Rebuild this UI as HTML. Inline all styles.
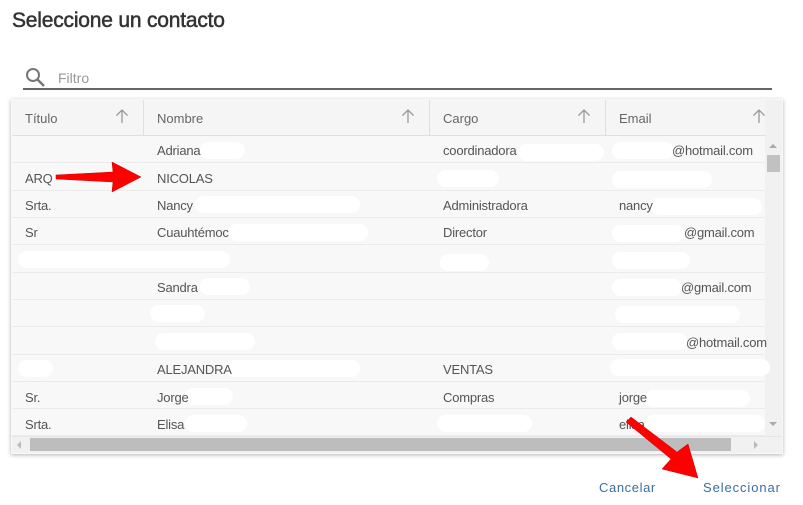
<!DOCTYPE html>
<html><head><meta charset="utf-8">
<style>
*{margin:0;padding:0;box-sizing:border-box}
body{width:803px;height:505px;background:#fff;font-family:"Liberation Sans",sans-serif;position:relative;overflow:hidden;color:#555}
.t{position:absolute;font-size:13px;color:#555;white-space:nowrap;letter-spacing:-0.2px}
.b{position:absolute;background:#fff;border-radius:9px;height:17px}
.row{position:absolute;left:12px;width:753px;height:27px;background:#f8f8f8;border-bottom:1px solid #ebebeb}
.h{position:absolute;font-size:13px;color:#666;top:111px}
.ar{position:absolute;top:108px}
.vl{position:absolute;top:100px;width:1px;height:36px;background:#e0e0e0}
</style></head><body>
<div style="position:absolute;left:12px;top:9px;font-size:21px;color:#333;letter-spacing:-0.2px;-webkit-text-stroke:0.5px #333">Seleccione un contacto</div>
<svg style="position:absolute;left:25px;top:67px" width="22" height="22" viewBox="0 0 22 22"><circle cx="8" cy="8" r="6" fill="none" stroke="#777" stroke-width="2"/><line x1="12.5" y1="12.5" x2="19" y2="19" stroke="#777" stroke-width="2.5"/></svg>
<div style="position:absolute;left:58px;top:70px;font-size:14px;color:#999">Filtro</div>
<div style="position:absolute;left:23px;top:88px;width:749px;height:2px;background:#666"></div>

<div style="position:absolute;left:11px;top:99px;width:772px;height:355px;box-shadow:0 1px 4px rgba(0,0,0,0.3);background:#f8f8f8"></div>
<div style="position:absolute;left:12px;top:100px;width:753px;height:36px;background:#f5f5f5;border-bottom:1px solid #e0e0e0"></div>
<div class="vl" style="left:143px"></div><div class="vl" style="left:429px"></div><div class="vl" style="left:605px"></div>
<div class="h" style="left:25px">Título</div>
<div class="h" style="left:157px">Nombre</div>
<div class="h" style="left:443px">Cargo</div>
<div class="h" style="left:619px">Email</div>
<svg class="ar" style="left:115px" width="14" height="16"><path d="M7 15V2M1.5 7.5L7 2l5.5 5.5" fill="none" stroke="#999" stroke-width="1.3"/></svg>
<svg class="ar" style="left:401px" width="14" height="16"><path d="M7 15V2M1.5 7.5L7 2l5.5 5.5" fill="none" stroke="#999" stroke-width="1.3"/></svg>
<svg class="ar" style="left:577px" width="14" height="16"><path d="M7 15V2M1.5 7.5L7 2l5.5 5.5" fill="none" stroke="#999" stroke-width="1.3"/></svg>
<svg class="ar" style="left:752px" width="14" height="16"><path d="M7 15V2M1.5 7.5L7 2l5.5 5.5" fill="none" stroke="#999" stroke-width="1.3"/></svg>

<div class="row" style="top:136px"></div><div class="row" style="top:164px"></div><div class="row" style="top:191px"></div><div class="row" style="top:218px"></div><div class="row" style="top:246px"></div><div class="row" style="top:273px"></div><div class="row" style="top:300px"></div><div class="row" style="top:328px"></div><div class="row" style="top:355px"></div><div class="row" style="top:382px"></div><div class="row" style="top:410px;height:26px"></div>

<div style="position:absolute;left:765px;top:100px;width:17px;height:336px;background:#f1f1f1"></div>
<div style="position:absolute;left:767px;top:155px;width:13px;height:17px;background:#c1c1c1"></div>
<div style="position:absolute;left:769px;top:144px;width:0;height:0;border-left:4px solid transparent;border-right:4px solid transparent;border-bottom:4px solid #aaa"></div>
<div style="position:absolute;left:769px;top:422px;width:0;height:0;border-left:4px solid transparent;border-right:4px solid transparent;border-top:4px solid #aaa"></div>
<div style="position:absolute;left:12px;top:436px;width:770px;height:17px;background:#f1f1f1;border-top:1px solid #e5e5e5"></div>
<div style="position:absolute;left:30px;top:438px;width:701px;height:13px;background:#bdbdbd"></div>
<div style="position:absolute;left:17px;top:441px;border-top:4px solid transparent;border-bottom:4px solid transparent;border-right:4px solid #bbb"></div>
<div style="position:absolute;left:754px;top:441px;border-top:4px solid transparent;border-bottom:4px solid transparent;border-left:4px solid #bbb"></div>

<div class="b" style="left:200px;top:142px;width:45px"></div>
<div class="b" style="left:518px;top:144px;width:86px"></div>
<div class="b" style="left:612px;top:142px;width:62px"></div>
<div class="b" style="left:437px;top:170px;width:62px"></div>
<div class="b" style="left:612px;top:171px;width:100px"></div>
<div class="b" style="left:195px;top:196px;width:165px"></div>
<div class="b" style="left:650px;top:198px;width:112px"></div>
<div class="b" style="left:228px;top:224px;width:140px"></div>
<div class="b" style="left:612px;top:225px;width:72px"></div>
<div class="b" style="left:18px;top:251px;width:212px"></div>
<div class="b" style="left:440px;top:254px;width:49px"></div>
<div class="b" style="left:612px;top:252px;width:78px"></div>
<div class="b" style="left:200px;top:278px;width:50px"></div>
<div class="b" style="left:612px;top:279px;width:70px"></div>
<div class="b" style="left:150px;top:305px;width:55px"></div>
<div class="b" style="left:615px;top:306px;width:125px"></div>
<div class="b" style="left:155px;top:333px;width:100px"></div>
<div class="b" style="left:612px;top:333px;width:75px"></div>
<div class="b" style="left:18px;top:360px;width:35px"></div>
<div class="b" style="left:225px;top:360px;width:135px"></div>
<div class="b" style="left:610px;top:359px;width:160px"></div>
<div class="b" style="left:185px;top:388px;width:48px"></div>
<div class="b" style="left:645px;top:390px;width:105px"></div>
<div class="b" style="left:185px;top:415px;width:62px"></div>
<div class="b" style="left:437px;top:415px;width:95px"></div>
<div class="b" style="left:645px;top:415px;width:120px"></div>

<div class="t" style="left:157px;top:143px">Adriana</div>
<div class="t" style="left:443px;top:143px">coordinadora</div>
<div class="t" style="left:672px;top:143px">@hotmail.com</div>
<div class="t" style="left:25px;top:171px">ARQ</div>
<div class="t" style="left:157px;top:171px">NICOLAS</div>
<div class="t" style="left:25px;top:198px">Srta.</div>
<div class="t" style="left:157px;top:198px">Nancy</div>
<div class="t" style="left:443px;top:198px">Administradora</div>
<div class="t" style="left:619px;top:198px">nancy</div>
<div class="t" style="left:25px;top:225px">Sr</div>
<div class="t" style="left:157px;top:225px">Cuauhtémoc</div>
<div class="t" style="left:443px;top:225px">Director</div>
<div class="t" style="left:684px;top:225px">@gmail.com</div>
<div class="t" style="left:157px;top:280px">Sandra</div>
<div class="t" style="left:681px;top:280px">@gmail.com</div>
<div class="t" style="left:686px;top:335px">@hotmail.com</div>
<div class="t" style="left:157px;top:362px">ALEJANDRA</div>
<div class="t" style="left:443px;top:362px">VENTAS</div>
<div class="t" style="left:25px;top:390px">Sr.</div>
<div class="t" style="left:157px;top:390px">Jorge</div>
<div class="t" style="left:443px;top:390px">Compras</div>
<div class="t" style="left:619px;top:390px">jorge</div>
<div class="t" style="left:25px;top:417px">Srta.</div>
<div class="t" style="left:157px;top:417px">Elisa</div>
<div class="t" style="left:619px;top:417px">elisa</div>

<svg style="position:absolute;left:0;top:0" width="803" height="505">
<polygon points="56,175 113,172 112,162 141,177 112,192 113,182 56,179" fill="#f00" stroke="#c00" stroke-width="0.5"/>
<polygon points="626,422 631,417 677,452 688,444 698,478 662,469 671,459" fill="#f00" stroke="#c00" stroke-width="0.5"/>
</svg>

<div style="position:absolute;left:599px;top:480px;font-size:13px;color:#3a6ea5;letter-spacing:0.6px">Cancelar</div>
<div style="position:absolute;left:703px;top:480px;font-size:13px;color:#3a6ea5;letter-spacing:0.9px">Seleccionar</div>
</body></html>
